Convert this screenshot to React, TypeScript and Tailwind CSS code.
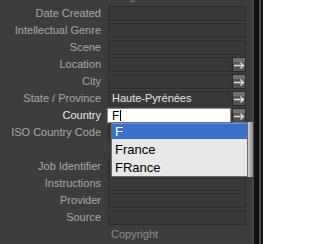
type Row = {
  label?: string;
  value?: string;
  arrow?: boolean;
  kind?: "header" | "spacer" | "country";
};

const ROWS: Row[] = [
  { label: "Image", kind: "header" },
  { label: "Date Created" },
  { label: "Intellectual Genre" },
  { label: "Scene" },
  { label: "Location", arrow: true },
  { label: "City", arrow: true },
  { label: "State / Province", value: "Haute-Pyrénées", arrow: true },
  { label: "Country", value: "F", arrow: true, kind: "country" },
  { label: "ISO Country Code" },
  { kind: "spacer" },
  { label: "Job Identifier" },
  { label: "Instructions" },
  { label: "Provider" },
  { label: "Source" },
  { label: "Copyright", kind: "header" },
];

const SUGGESTIONS = ["France", "FRance"];

function ArrowButton() {
  return (
    <div className="flex h-[15px] w-[14px] shrink-0 items-end justify-center border border-[#2a2a2a] bg-[linear-gradient(#717171_0%,#717171_28%,#585858_30%,#505050_100%)]">
      <svg width="12" height="10" viewBox="0 0 12 10" className="mb-px">
        <path d="M1 5.5H10.5M7.5 2.5L10.5 5.5L7.5 8.5" fill="none" stroke="#dcdcdc" strokeWidth="1.3" />
      </svg>
    </div>
  );
}

function Suggestions() {
  return (
    <div className="absolute left-[111px] top-[15px] z-10 flex h-[55px]">
      <div className="flex w-[137px] flex-col border border-[#6e6e6e] bg-[#e7e7e7] text-[13px] leading-none">
        <div className="flex h-[16px] items-center border-t border-[#6b95dc] bg-[#3a70c8] pl-[3px] text-white">F</div>
        <div className="mt-[2px] flex h-[18px] items-center pl-[3px] text-black">{SUGGESTIONS[0]}</div>
        <div className="flex h-[18px] items-center pl-[3px] text-black">{SUGGESTIONS[1]}</div>
      </div>
      <div className="w-[5px] bg-gradient-to-r from-[#cdcdcd] to-[#8c8c8c]" />
    </div>
  );
}

function FieldRow({ row }: { row: Row }) {
  if (row.kind === "spacer") return <div className="h-[17px]" />;

  if (row.kind === "header") {
    return (
      <div className="flex h-[17px] items-center pl-[111px] text-[11px] text-[#8e8e8e]">{row.label}</div>
    );
  }

  const isCountry = row.kind === "country";

  return (
    <div className="relative flex h-[17px] items-center">
      <div className={`w-[101px] shrink-0 whitespace-nowrap text-right text-[11px] ${isCountry ? "text-[#e8e8e8]" : "text-[#a7a7a7]"}`}>
        {row.label}
      </div>
      <div className="ml-[7px] flex w-[138px] gap-px">
        {isCountry ? (
          <div className="-ml-px flex h-[15px] flex-1 items-center border border-[#8d8d8d] bg-white pl-[4px] text-[12px] text-black">
            {row.value}
            <span className="ml-px h-[11px] w-px bg-black" />
          </div>
        ) : (
          <div className="flex h-[15px] flex-1 items-center border border-[#2d2d2d] bg-[#393939] pl-[3px] text-[11px] text-[#e4e4e4]">
            {row.value}
          </div>
        )}
        {row.arrow && <ArrowButton />}
      </div>
      {isCountry && <Suggestions />}
    </div>
  );
}

export default function App() {
  return (
    <div className="flex h-[244px] w-[263px] overflow-hidden bg-[#3d3d3d] font-['Liberation_Sans',Arial,sans-serif]">
      <div className="-mt-[12px] w-[252px] shrink-0">
        {ROWS.map((row, i) => (
          <FieldRow key={i} row={row} />
        ))}
      </div>
      <div className="w-[2px] bg-[#464646]" />
      <div className="w-[5px] bg-[#121212]" />
      <div className="w-[2px] bg-[#4c4c4c]" />
      <div className="w-[2px] bg-[#151515]" />
    </div>
  );
}
